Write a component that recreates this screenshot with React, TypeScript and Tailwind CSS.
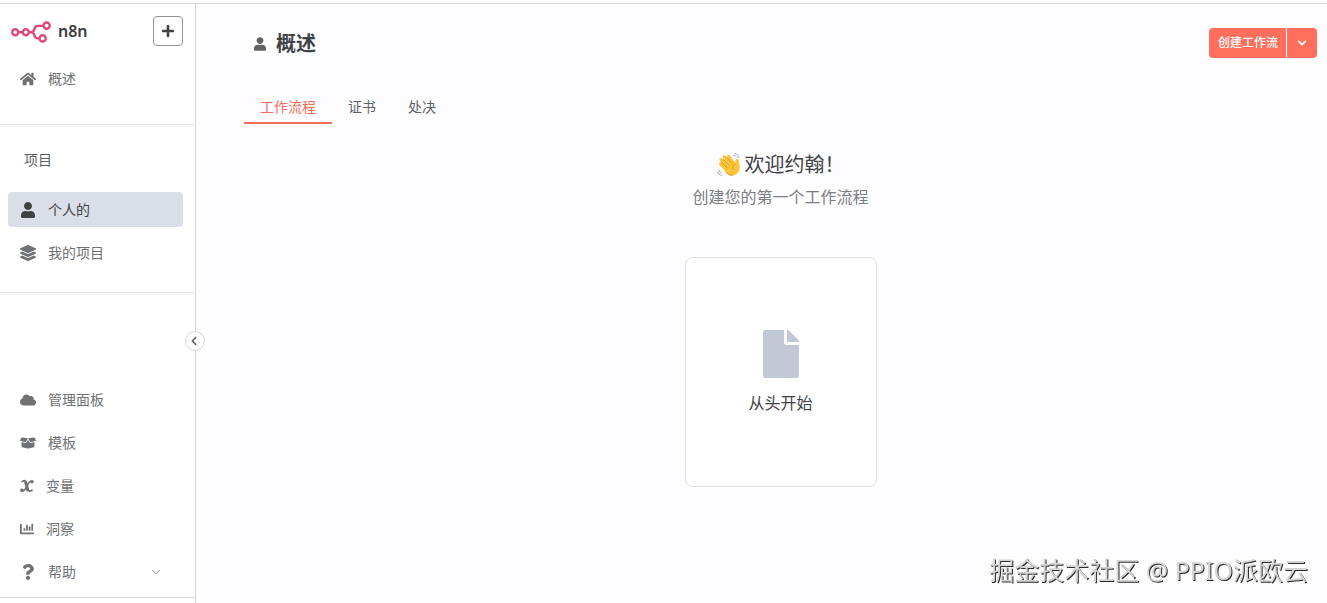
import React from 'react';
import type { IconType } from 'react-icons';
import {
  FaBoxOpen,
  FaChartBar,
  FaChevronDown,
  FaChevronLeft,
  FaCloud,
  FaFile,
  FaHome,
  FaLayerGroup,
  FaPlus,
  FaQuestion,
  FaUser,
} from 'react-icons/fa';
import { ChevronDown } from 'lucide-react';

interface NavItemProps {
  label: string;
  icon: IconType | React.FC<{ className?: string }>;
  active?: boolean;
  compact?: boolean;
  expandable?: boolean;
}

const VariableIcon: React.FC<{ className?: string }> = ({ className }) => (
  <svg viewBox="0 0 14 14" className={className} fill="none" stroke="currentColor" strokeLinecap="round">
    <path d="M2.2 2.4 C4.4 0.8 5.8 1.6 6.3 4 L7.6 9.8 C8.1 12.2 10 12.8 12 11.2" strokeWidth="1.8" />
    <path d="M5.6 3.2 L7.8 11" strokeWidth="3" />
    <path d="M12 2.4 C9.6 1.4 8.6 4.2 7.1 7 C5.6 9.8 4.4 12.8 2 11.6" strokeWidth="1.5" />
    <circle cx="12" cy="2.7" r="1.7" fill="currentColor" stroke="none" />
    <circle cx="1.9" cy="11.4" r="1.8" fill="currentColor" stroke="none" />
  </svg>
);

const Logo = () => (
  <svg viewBox="0 0 40 22" className="w-10 h-[22px] mt-0.5" fill="none" stroke="#df4b79" strokeWidth="2.4">
    <circle cx="4.2" cy="11.3" r="3" />
    <circle cx="14.8" cy="11.3" r="3" />
    <circle cx="35.6" cy="4.6" r="3.1" />
    <circle cx="31.6" cy="17.4" r="3.1" />
    <path d="M7.2 11.3 H11.8 M17.8 11.3 H20.5 C24.8 11.3 21.5 4.9 27 4.9 H32.5 M20.5 11.3 C24.8 11.3 21.5 17.4 27 17.4 H28.5" />
  </svg>
);

const WavingHand = () => (
  <svg viewBox="0 0 24 24" className="w-6 h-6" role="img" aria-label="👋" fill="none" strokeLinecap="round">
    <g stroke="#fcc438" strokeWidth="3.2">
      <path d="M3.6 10.8 L9.5 16.5" />
      <path d="M4 6.6 L12 14.5" />
      <path d="M7.2 3.6 L14.5 12" />
      <path d="M11.6 3.4 L17 10.8" />
    </g>
    <path
      d="M7 11 L15.6 7.6 L18.2 11.2 C18.8 9.6 18 7.8 18.8 6.4 C19.6 5.2 21.4 5.6 21.7 7.2 C22 10 22.9 12.6 22.6 15.5 C22.2 19.4 19 22.4 15 22.4 C12.2 22.4 10.4 21 8.6 19 L5.6 15 Z"
      fill="#fcc438"
    />
    <g stroke="#e0931c" strokeWidth="0.9">
      <path d="M4.4 9.2 L9.7 14.4" />
      <path d="M6.4 6.4 L12.2 12.4" />
      <path d="M9.9 4.4 L15 10.4" />
      <path d="M18.2 11.2 C16 12.2 15.2 14 16 16" />
      <path d="M8.6 19 C10.6 21.6 12.8 22.6 15.4 22.3" />
    </g>
    <g stroke="#9aa7b0" strokeWidth="0.9">
      <path d="M16.4 2.2 C18 2.4 19 3 19.6 4.2" />
      <path d="M17.8 0.6 C20 1 21.4 2.2 22 4.2" />
      <path d="M1.8 16.8 C2.2 18.4 3.2 19.6 4.8 20.2" />
      <path d="M0.6 18.6 C1.2 20.8 2.6 22 4.6 22.4" />
    </g>
  </svg>
);

const NavItem: React.FC<NavItemProps> = ({ label, icon: Icon, active, compact, expandable }) => (
  <li>
    <a
      href="#"
      className={`flex items-center gap-3 h-[35px] ml-2 mr-3 pl-3 pr-5 rounded text-sm ${
        active ? 'bg-[#d9dee8] text-[#414244]' : 'text-[#707174]'
      }`}
    >
      <Icon className={`shrink-0 ${compact ? 'w-[14px] h-[14px]' : 'w-4 h-4'}`} />
      <span>{label}</span>
      {expandable && <ChevronDown className="ml-auto w-[14px] h-[14px]" strokeWidth={1.5} />}
    </a>
  </li>
);

const tabs = ['工作流程', '证书', '处决'];

const Sidebar = () => (
  <aside className="relative flex flex-col w-[196px] shrink-0 bg-white border-r border-[#d3d8e2]">
    <div className="flex items-center justify-between pt-3 pb-[15px] pl-[11px] pr-3">
      <a href="#" className="flex items-center gap-[7px] text-[#3c3d40]">
        <Logo />
        <span className="font-['Noto_Sans'] text-base leading-5 font-semibold">n8n</span>
      </a>
      <button
        aria-label="+"
        className="flex items-center justify-center w-[30px] h-[30px] rounded border border-[#8f9299] text-[#414244]"
      >
        <FaPlus className="w-[14px] h-[14px]" />
      </button>
    </div>

    <ul className="pb-7 border-b border-[#e3e8ef]">
      <NavItem label="概述" icon={FaHome} />
    </ul>

    <div className="pt-6 pb-[22px] border-b border-[#e3e8ef]">
      <h2 className="pl-6 mb-[21px] text-sm leading-[22px] text-[#606164]">项目</h2>
      <ul className="flex flex-col gap-2">
        <NavItem label="个人的" icon={FaUser} active />
        <NavItem label="我的项目" icon={FaLayerGroup} />
      </ul>
    </div>

    <ul className="flex flex-col gap-2 mt-auto pb-2 mb-[5px] border-b border-[#d3d8e2]">
      <NavItem label="管理面板" icon={FaCloud} />
      <NavItem label="模板" icon={FaBoxOpen} />
      <NavItem label="变量" icon={VariableIcon} compact />
      <NavItem label="洞察" icon={FaChartBar} compact />
      <NavItem label="帮助" icon={FaQuestion} expandable />
    </ul>

    {/* Collapse toggle sits over the sidebar's edge */}
    <button
      aria-label="‹"
      className="absolute top-[327px] -right-[10px] flex items-center justify-center w-5 h-5 pr-0.5 rounded-full bg-white border border-[#d3d8e2] text-[#606164]"
    >
      <FaChevronLeft className="w-[10px] h-[10px]" />
    </button>
  </aside>
);

export default function App() {
  return (
    <div className="flex min-h-screen pt-[3px] bg-[#fdfdff] font-['Noto_Sans','Noto_Sans_CJK_SC',sans-serif]">
      <div className="flex flex-1 border-t border-[#d6d7e0]">
        <Sidebar />

        <main className="flex-1 pt-6 pl-12 pr-[10px]">
          <header className="flex items-center justify-between">
            <div className="flex items-center gap-[10px] pt-0.5 pl-[10px]">
              <FaUser className="w-3 h-[14px] text-[#606164]" />
              <h1 className="text-xl leading-7 font-semibold text-[#414244]">概述</h1>
            </div>
            <div className="flex gap-px text-white">
              <button className="h-[30px] pl-[9px] pr-2 rounded-l bg-[#ff6f5c] text-xs font-medium">创建工作流</button>
              <button aria-label="▾" className="flex items-center justify-center w-[30px] h-[30px] rounded-r bg-[#ff6f5c]">
                <FaChevronDown className="w-[10px] h-[10px]" />
              </button>
            </div>
          </header>

          <nav className="flex mt-[39px] text-sm leading-5">
            {tabs.map((tab, i) => (
              <a
                key={tab}
                href="#"
                className={`px-4 pb-[5px] border-b-2 ${
                  i === 0 ? 'border-[#f46d5b] text-[#f46d5b]' : 'border-transparent text-[#606164]'
                }`}
              >
                {tab}
              </a>
            ))}
          </nav>

          <section className="flex flex-col items-center pt-6">
            <h2 className="flex items-center gap-1 text-xl leading-[34px] text-[#414244]">
              <WavingHand />
              <span>欢迎约翰！</span>
            </h2>
            <p className="mt-0.5 text-base leading-[26px] text-[#7b7e84]">创建您的第一个工作流程</p>

            <button className="flex flex-col items-center justify-center w-48 h-[230px] mt-[47px] pt-0.5 gap-3 rounded-lg bg-white border border-[#dadee7]">
              <FaFile className="w-9 h-12 text-[#c3c8d5]" />
              <span className="text-base leading-[26px] text-[#414244]">从头开始</span>
            </button>
          </section>
        </main>
      </div>

      <p className="fixed right-[19px] bottom-[15px] text-[25px] leading-9 text-[#d4d4d6] [text-shadow:1px_1px_0_#2c2c2e]">
        掘金技术社区 @ PPIO派欧云
      </p>
    </div>
  );
}
